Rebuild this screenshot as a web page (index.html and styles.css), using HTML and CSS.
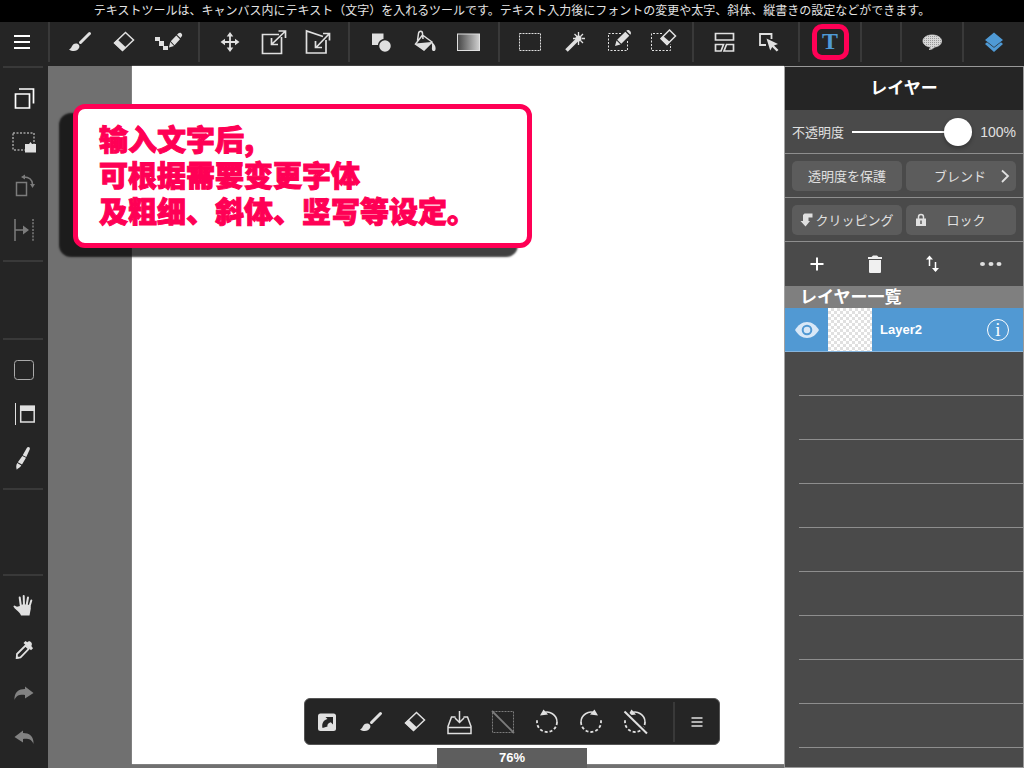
FILE: index.html
```html
<!DOCTYPE html>
<html lang="ja">
<head>
<meta charset="utf-8">
<title>テキストツール</title>
<link rel="stylesheet" href="styles.css">
</head>
<body>
<svg class="defs" aria-hidden="true">
  <defs>
    <linearGradient id="fade"><stop offset="0" stop-color="#444"/><stop offset="1" stop-color="#d0d0d0"/></linearGradient>
    <pattern id="mesh" width="2" height="2" patternUnits="userSpaceOnUse"><rect width="2" height="2" fill="#d8d8d8"/><rect width="1" height="1" fill="#999"/></pattern>
  </defs>
  <symbol id="brush" viewBox="0 0 32 32">
    <path d="M25.5 7.5 16.500 16.500" stroke="currentColor" stroke-width="3" stroke-linecap="round"/>
    <path fill="currentColor" d="M5 23.500c3-.5 2.500-6 7-6 3 0 4 2.500 3 4.500-1.500 3.500-6.500 4-10 1.500z"/>
  </symbol>
  <symbol id="eraser" viewBox="0 0 32 32">
    <path fill="none" stroke="currentColor" stroke-width="1.500" d="M17.500 6.500 25.500 14 14.500 24.500 6.500 17z"/>
    <path fill="currentColor" d="M9.500 13.500 18 21.500 14.500 25 6 17z"/>
  </symbol>
  <symbol id="menu" viewBox="0 0 32 32"><path stroke="currentColor" stroke-width="2" d="M8 10H24M8 16H24M8 22H24"/></symbol>
  <symbol id="turn" viewBox="0 0 32 32">
    <path fill="none" stroke="currentColor" stroke-width="1.500" d="M12 7A10 10 0 0 1 26 16"/>
    <path fill="none" stroke="currentColor" stroke-width="1.800" stroke-dasharray="3 2" d="M26 16A10 10 0 0 1 6 16V14"/>
    <path fill="currentColor" d="M9 9.500 12.500 3.500 17 8.500z"/>
  </symbol>
</svg>
<div class="app">
  <header class="hint">テキストツールは、キャンバス内にテキスト（文字）を入れるツールです。テキスト入力後にフォントの変更や太字、斜体、縦書きの設定などができます。</header>

  <nav class="toolbar" aria-label="ツール">
    <div class="group group-menu">
      <button class="tool" aria-label="メニュー"><svg class="icon bright"><use href="#menu"/></svg></button>
    </div>
    <div class="group">
      <button class="tool" aria-label="ブラシ"><svg class="icon"><use href="#brush"/></svg></button>
      <button class="tool" aria-label="消しゴム"><svg class="icon"><use href="#eraser"/></svg></button>
      <button class="tool" aria-label="ドットペン"><svg class="icon" viewBox="0 0 32 32"><path fill="currentColor" d="M3 11h5v4h4v5h4v4h-5v-4h-4v-5h-4zM17 21.500l1.200-5.500 3.800 4zM18.800 15.300 24.300 9.500l3.700 3.700-5.500 6zM25 8.800l1.500-1.500c1.800-1.800 4.800 1.200 3.300 3l-1.300 1.800z"/></svg></button>
    </div>
    <div class="group">
      <button class="tool" aria-label="移動"><svg class="icon" viewBox="0 0 32 32"><path stroke="currentColor" stroke-width="1.800" d="M16 8V24M8 16H24"/><path fill="currentColor" d="M16 6l3.300 4.500h-6.600zM16 26l3.300-4.500h-6.600zM6.500 16l4.500-3.300v6.600zM25.500 16l-4.500-3.300v6.600z"/></svg></button>
      <button class="tool" aria-label="変形"><svg class="icon" viewBox="0 0 32 32"><path fill="none" stroke="currentColor" stroke-width="1.700" d="M21 8.500H4.500V27.500H23.500V11M14 18 27 5.500M20.500 5H27.500V12M13.500 12V18.500H20"/></svg></button>
      <button class="tool" aria-label="自由変形"><svg class="icon" viewBox="0 0 32 32"><path fill="none" stroke="currentColor" stroke-width="1.700" d="M21 10.500 4.500 5V27H24V14M14 21.500 27 8M21 7.500H27.500V14.500M13.500 15V21.500H20"/></svg></button>
    </div>
    <div class="group">
      <button class="tool" aria-label="図形"><svg class="icon" viewBox="0 0 32 32"><path fill="currentColor" d="M8 7.500H19.500V19H8z"/><circle cx="21" cy="20" r="6.500" fill="currentColor" stroke="#252525" stroke-width="1.500"/></svg></button>
      <button class="tool" aria-label="塗りつぶし"><svg class="icon" viewBox="0 0 32 32"><path fill="none" stroke="currentColor" stroke-width="1.500" d="M14.500 9 24 16 16 24 7.500 18zM9.500 14.500 10.500 7.500C11 4.500 14.500 4.500 14.500 7.500L15 13"/><path fill="currentColor" d="M7.500 17.500 23.500 16 16 24.500zM23 16c3.500 1 5 5 4.500 7.500-.5 2-3 2-3.500 0-.3-2 .8-4-1-7.500z"/></svg></button>
      <button class="tool" aria-label="グラデーション"><svg class="icon" viewBox="0 0 32 32"><rect x="5.500" y="8" width="22" height="16.500" fill="url(#fade)" stroke="currentColor"/></svg></button>
    </div>
    <div class="group">
      <button class="tool" aria-label="選択範囲"><svg class="icon" viewBox="0 0 32 32"><rect x="5.500" y="7.500" width="21" height="17" fill="none" stroke="currentColor" stroke-dasharray="2 1"/></svg></button>
      <button class="tool" aria-label="自動選択"><svg class="icon" viewBox="0 0 32 32"><path stroke="currentColor" stroke-width="3.500" d="M8.500 24.500 19 14"/><circle cx="20.500" cy="12.500" r="3" fill="currentColor"/><path stroke="currentColor" stroke-width="1.300" d="M20.500 6V10M20.500 15V19M15 12.500H18M24 12.500H27M16.500 8 19 10.500M25 8 22.500 10.500M25 17 22.500 14.500"/></svg></button>
      <button class="tool" aria-label="選択ペン"><svg class="icon" viewBox="0 0 32 32"><path fill="none" stroke="currentColor" stroke-dasharray="2 1.500" d="M19 7.500H6.500V24.500H25.500V14"/><path fill="currentColor" d="M13 20l1.500-5.500 4 4zM15.200 13.800 23.300 5.800l4 4-8 8zM24.300 4.800c2-2.500 6.500 1.300 4 4z"/></svg></button>
      <button class="tool" aria-label="選択消し"><svg class="icon" viewBox="0 0 32 32"><path fill="none" stroke="currentColor" stroke-dasharray="2 1.500" d="M16 7.500H5.500V24.500H24.500V18"/><path fill="none" stroke="currentColor" stroke-width="1.500" d="M23.500 4 29.500 10 21 18.500 15 12.500z"/><path fill="currentColor" d="M17 10 24 16 21 19.500 14.500 13z"/></svg></button>
    </div>
    <div class="group">
      <button class="tool" aria-label="コマ割り"><svg class="icon" viewBox="0 0 32 32"><path fill="none" stroke="currentColor" stroke-width="1.700" d="M7.500 7.500H25.500V14H7.500zM7.500 18.500H15.500L13 25H7.500zM18.500 18.500H25.500V25H16z"/></svg></button>
      <button class="tool" aria-label="操作"><svg class="icon" viewBox="0 0 32 32"><path fill="none" stroke="currentColor" stroke-width="1.800" d="M14 19H8V8H19.500V13"/><path fill="currentColor" d="M14.500 12.500 26 18l-4 1.500 4.500 4.500-1.800 1.500-4.500-4.500-2 3.500z"/></svg></button>
    </div>
    <div class="group">
      <button class="tool" aria-label="テキスト"><span class="text-mark">T</span></button>
    </div>
    <div class="group group-gap"></div>
    <div class="group">
      <button class="tool" aria-label="吹き出し"><svg class="icon" viewBox="0 0 32 32"><path fill="url(#mesh)" stroke="#d8d8d8" stroke-width=".8" d="M16 9c5.500 0 9.500 2.500 9.500 6s-3 5.500-7 6c-1 1.500-3 2.500-5.500 2.500 1-.7 1.500-1.500 1.500-2.500-4.500-.5-7.500-3-7.500-6 0-3.500 4-6 9-6z"/></svg></button>
    </div>
    <div class="group group-last">
      <button class="tool" aria-label="レイヤー"><svg class="icon active" viewBox="0 0 32 32"><path fill="currentColor" d="M16 6.500 25 14 16 21 7 14zM7 18l2-1.700 7 5.500 7-5.500 2 1.700-9 8z"/></svg></button>
    </div>
  </nav>

  <main class="work">
    <nav class="side" aria-label="編集">
      <div class="side-group">
        <button class="tool" aria-label="複製"><svg class="icon bright" viewBox="0 0 32 32"><path fill="none" stroke="currentColor" stroke-width="1.700" d="M7.500 12H21.500V26H7.500zM11 7H25.500V21.500"/></svg></button>
        <button class="tool" aria-label="選択範囲"><svg class="icon" viewBox="0 0 32 32"><rect x="5" y="7" width="21" height="17" fill="none" stroke="currentColor" stroke-dasharray="2 1.500"/><path fill="currentColor" d="M17 18h4l1.500-2 1.500 2h4v8.500H17z"/></svg></button>
        <button class="tool" aria-label="回転"><svg class="icon dim" viewBox="0 0 32 32"><path fill="none" stroke="currentColor" stroke-width="1.500" d="M8.500 12.500H18.500V25.500H8.500zM16 7C21 7 24 10 24.500 14"/><path fill="currentColor" d="M13 7l4-2.500v5zM24.500 18l-2.500-4h5z"/></svg></button>
        <button class="tool" aria-label="反転"><svg class="icon dim" viewBox="0 0 32 32"><path stroke="currentColor" stroke-width="1.500" d="M7 5V27M7 16H17"/><path stroke="currentColor" stroke-width="1.500" stroke-dasharray="2 1.300" d="M25 5V27"/><path fill="currentColor" d="M21 16l-6-4.500v9z"/></svg></button>
      </div>
      <div class="side-space side-space-top"></div>
      <div class="side-group">
        <button class="tool" aria-label="色"><svg class="icon soft" viewBox="0 0 32 32"><rect x="6.500" y="6.500" width="19" height="19" rx="3" fill="none" stroke="currentColor"/></svg></button>
        <button class="tool" aria-label="パネル"><svg class="icon" viewBox="0 0 32 32"><path stroke="currentColor" d="M7.500 5V27"/><path fill="none" stroke="currentColor" stroke-width="1.500" d="M12.700 8.500H26.200V24H12.700z"/><path fill="currentColor" d="M12 7.500H27V13H12z"/></svg></button>
        <button class="tool" aria-label="ブラシ設定"><svg class="icon" viewBox="0 0 32 32"><path fill="currentColor" d="M18.800 6c1-1.800 3.700-.8 3 1.200L18.300 15l-3.600-1.700zM14.300 14 18 15.800 14 22.500 9.800 20.300zM9.300 21 13.300 23.500C12 26 9.500 26 8.800 27.800 8 25.500 8 23 9.300 21z"/></svg></button>
      </div>
      <div class="side-space side-space-bottom"></div>
      <div class="side-group side-group-end">
        <button class="tool" aria-label="手のひら"><svg class="icon" viewBox="0 0 32 32"><path stroke="currentColor" stroke-width="2" stroke-linecap="round" d="M13 17 11.700 7.500M16 16 15.700 6M18.500 16 20 7.500M21 18 23.300 10.500M12.500 20 6.500 16.500"/><path fill="currentColor" d="M5.800 17.500 12 16V15.500L14 14.500H20L22.500 16 22.800 18.500 21.500 25.500H13C12 23 10.500 21.500 8.500 20z"/></svg></button>
        <button class="tool" aria-label="スポイト"><svg class="icon" viewBox="0 0 32 32"><path fill="none" stroke="currentColor" stroke-width="1.800" d="M8.700 24 9 20 17.500 11.500 20.800 14.800 12.500 23.300z"/><path fill="currentColor" d="M15.500 9 17.500 7l1.800 1.300c2-2.800 6.200.9 4 3.700l1.700 2.300-2 2-7.500-7.300zM8 24.800V21.500l3.300 2.800z"/></svg></button>
        <button class="tool" aria-label="やり直す"><svg class="icon dimmer" viewBox="0 0 32 32"><path fill="currentColor" d="M6.500 22C6 14 11 11 17 11V8.500L25.500 15 17 20.500V17C12 16.500 8.500 17 6.500 22z"/></svg></button>
        <button class="tool" aria-label="取り消す"><svg class="icon dimmer" viewBox="0 0 32 32"><path fill="currentColor" d="M25.500 22C26 14 21 11 15 11V8.500L6.500 15 15 20.500V17C20 16.500 23.500 17 25.500 22z"/></svg></button>
      </div>
    </nav>

    <section class="canvas">
      <div class="paper"></div>
      <p class="callout" lang="zh-CN">输入文字后,<br>可根据需要变更字体<br>及粗细、斜体、竖写等设定。</p>
    </section>

    <aside class="panel">
      <h1 class="panel-title">レイヤー</h1>
      <div class="row row-opacity">
        <label for="opacity">不透明度</label>
        <input class="slider" id="opacity" type="range" min="0" max="100" value="100">
        <output class="percent" for="opacity">100%</output>
      </div>
      <div class="row row-pair">
        <button class="chip chip-center">透明度を保護</button>
        <button class="chip chip-more"><span>ブレンド</span><svg class="chip-icon" viewBox="0 0 10 16"><path fill="none" stroke="currentColor" stroke-width="1.800" d="M2 2.500 8 8 2 14"/></svg></button>
      </div>
      <div class="row row-pair">
        <button class="chip chip-center"><svg class="chip-clip-icon" viewBox="0 0 13 16"><path fill="currentColor" d="M4.500 1.500H12.500V5.500H8.500V9H10L5.500 14.500.5 9H3V3z"/></svg><span>クリッピング</span></button>
        <button class="chip"><svg class="chip-icon" viewBox="0 0 10 16"><path fill="none" stroke="currentColor" stroke-width="1.500" d="M2.500 7V5a2.500 2.500 0 0 1 5 0V7"/><path fill="currentColor" d="M0 6.500H10V14H0z"/><path stroke="#5c5c5c" stroke-width="1.500" d="M5 8.500V12"/></svg><span class="chip-label">ロック</span></button>
      </div>
      <div class="row row-actions">
        <button class="action" aria-label="追加"><svg class="icon bright" viewBox="0 0 32 32"><path stroke="currentColor" stroke-width="2" d="M16 9.500V22.500M9.500 16H22.500"/></svg></button>
        <button class="action" aria-label="削除"><svg class="icon bright" viewBox="0 0 32 32"><path fill="#f0f0f0" d="M9 9H12.500L14 7.500H18L19.500 9H23V11H9zM10 12H22V23.500C22 24.500 21.500 25 20.500 25H11.500C10.500 25 10 24.500 10 23.500z"/></svg></button>
        <button class="action" aria-label="並べ替え"><svg class="icon bright" viewBox="0 0 32 32"><path stroke="currentColor" stroke-width="1.500" d="M12.500 9V18M18.500 14V23"/><path fill="currentColor" d="M12.500 7.500 16 11.500H9zM18.500 24 15 20H22z"/></svg></button>
        <button class="action" aria-label="その他"><svg class="icon" viewBox="0 0 32 32"><g fill="currentColor"><ellipse cx="7.500" cy="16" rx="2.500" ry="2"/><ellipse cx="16" cy="16" rx="2.500" ry="2"/><ellipse cx="24" cy="16" rx="2.500" ry="2"/></g></svg></button>
      </div>
      <h2 class="list-title">レイヤー一覧</h2>
      <ul class="layers">
        <li class="layer">
          <button class="eye" aria-label="表示"><svg class="eye-icon" viewBox="0 0 24 16"><path fill="#d9e8f7" d="M0 8C3 3 7 0 12 0s9 3 12 8c-3 5-7 8-12 8S3 13 0 8z"/><circle cx="12" cy="8" r="4.300" fill="none" stroke="#5199d3" stroke-width="2"/></svg></button>
          <span class="thumb"></span>
          <span class="layer-name">Layer2</span>
          <button class="info" aria-label="情報">i</button>
        </li>
        <li class="slot"></li><li class="slot"></li><li class="slot"></li>
        <li class="slot"></li><li class="slot"></li><li class="slot"></li>
        <li class="slot"></li><li class="slot"></li><li class="slot"></li>
      </ul>
    </aside>
  </main>

  <div class="dock">
    <nav class="quick" aria-label="クイックツール">
      <button class="tool" aria-label="切り替え"><svg class="icon" viewBox="0 0 32 32"><rect x="7" y="7.500" width="18" height="17.500" rx="2.500" fill="currentColor"/><path fill="#252525" d="M11.500 22C10.500 17.500 12.500 14 16.500 13L14.500 11H22V18.500L19.800 16.300C17 17 16 19 16.500 20.500z"/></svg></button>
      <button class="tool" aria-label="ブラシ"><svg class="icon"><use href="#brush"/></svg></button>
      <button class="tool" aria-label="消しゴム"><svg class="icon"><use href="#eraser"/></svg></button>
      <button class="tool" aria-label="保存"><svg class="icon" viewBox="0 0 32 32"><path fill="none" stroke="currentColor" stroke-width="1.500" d="M12.500 11H8.500L5 20.500V27.500H28V20.500L24.500 11H20.500M5 21.500H28M16.500 5V16M12 12 16.500 16.500 21 12"/></svg></button>
      <button class="tool" aria-label="選択解除"><svg class="icon dim" viewBox="0 0 32 32"><rect x="5.500" y="5.500" width="21" height="21" fill="none" stroke="currentColor" stroke-dasharray="2 1"/><path stroke="currentColor" stroke-width="1.800" d="M5 5 27 27"/></svg></button>
      <button class="tool" aria-label="左回転"><svg class="icon"><use href="#turn"/></svg></button>
      <button class="tool" aria-label="右回転"><svg class="icon flip"><use href="#turn"/></svg></button>
      <button class="tool" aria-label="回転リセット"><svg class="icon" viewBox="0 0 32 32"><use href="#turn"/><path stroke="#252525" stroke-width="2" d="M7.500 5.500 28.500 26"/><path stroke="currentColor" stroke-width="2" d="M5.500 5.500 28 27.500"/></svg></button>
      <span class="quick-rule"></span>
      <button class="tool" aria-label="メニュー"><svg class="icon" viewBox="0 0 32 32"><path stroke="currentColor" stroke-width="1.500" d="M10.500 12H21.500M10.500 16H21.500M10.500 20H21.500"/></svg></button>
    </nav>
    <div class="zoom">76%</div>
  </div>
</div>
</body>
</html>
```

FILE: styles.css
```css
* { box-sizing: border-box; }

body {
  margin: 0;
  font-family: "Liberation Sans", "Noto Sans CJK JP", sans-serif;
  color: #e0e0e0;
  background: #252525;
}

button {
  margin: 0;
  padding: 0;
  border: 0;
  background: none;
  color: inherit;
  font: inherit;
}

.defs { position: absolute; width: 0; height: 0; }

.app {
  position: relative;
  display: flex;
  flex-direction: column;
  height: 100vh;
  overflow: hidden;
}

.hint {
  flex: none;
  background: #000;
  color: #e4e4e4;
  font-size: 12px;
  line-height: 22px;
  text-align: center;
  white-space: nowrap;
}

/* Icons */
.tool {
  flex: none;
  display: flex;
  align-items: center;
  justify-content: center;
  width: 44px;
  height: 44px;
}
.icon { display: block; width: 32px; height: 32px; color: #e0e0e0; }
.bright { color: #fff; }
.soft { color: #aaa; }
.dim { color: #7c7c7c; }
.dimmer { color: #828282; }
.active { color: #4f9ad5; }
.flip { transform: scaleX(-1); }

/* Top toolbar */
.toolbar {
  flex: none;
  display: flex;
  padding-bottom: 4px;
  background: #252525;
}
.toolbar .tool { height: 40px; }
.group {
  display: flex;
  padding: 0 8px;
  border-right: 2px solid #393939;
}
.group-menu { padding: 0 4px 0 0; }
.group-gap { width: 40px; padding: 0; }
.group-last { border-right: 0; }
.text-mark {
  flex: none;
  width: 37px;
  height: 36px;
  border: 5px solid #ff0055;
  border-radius: 10px;
  color: #4f9ad5;
  font: bold 24px/25px "Liberation Serif", serif;
  text-align: center;
}

/* Work area */
.work {
  flex: 1;
  min-height: 0;
  display: grid;
  grid-template-columns: 48px minmax(0, 1fr) 240px;
  grid-template-rows: minmax(0, 1fr);
}

.side {
  display: flex;
  flex-direction: column;
  align-items: center;
  padding: 0 5px 0 3px;
  background: #252525;
}
.side-group {
  display: flex;
  flex-direction: column;
  align-items: center;
  width: 40px;
  padding: 8px 0;
  border: solid #393939;
  border-width: 2px 0;
}
.side-group .tool { margin-left: 2px; }
.side-group-end { border-bottom: 0; }
.side-space-top { flex: 19; }
.side-space-bottom { flex: 21; }

.canvas {
  position: relative;
  padding: 0 0 4px 84px;
  background: #707070;
}
.paper {
  height: 100%;
  background: #fff;
  box-shadow: 0 0 1px #ccc;
}
.callout {
  position: absolute;
  top: 38px;
  left: 25px;
  width: 459px;
  margin: 0;
  padding: 11px 21px 15px;
  border: 5px solid #ff0055;
  border-radius: 12px;
  background: #fff;
  box-shadow: -14px 9px 2px rgba(0, 0, 0, .75);
  color: #ff0055;
  font: 900 29px/36px "Noto Sans CJK SC", sans-serif;
  -webkit-text-stroke: 1px #ff0055;
}

/* Layer panel */
.panel {
  display: flex;
  flex-direction: column;
  min-height: 0;
  border: 1px solid #999;
  background: #4a4a4a;
}
.panel-title {
  margin: 0;
  background: #252525;
  color: #fff;
  font-size: 17px;
  font-weight: 700;
  line-height: 43px;
  text-align: center;
}
.row {
  flex: none;
  display: flex;
  align-items: center;
  height: 44px;
  border-bottom: 1px solid #8e8e8e;
  font-size: 13px;
}
.row-opacity { gap: 8px; padding: 0 7px; }
.row-opacity label { flex: none; }
.percent { flex: none; font-size: 14px; }
.slider {
  flex: 1;
  min-width: 0;
  height: 28px;
  margin: 0;
  background: none;
  appearance: none;
}
.slider::-webkit-slider-runnable-track { height: 2px; background: #fff; }
.slider::-webkit-slider-thumb {
  appearance: none;
  width: 28px;
  height: 28px;
  margin-top: -13px;
  border-radius: 50%;
  background: #fff;
  box-shadow: 0 2px 4px rgba(0, 0, 0, .3);
}
.row-pair {
  display: grid;
  grid-template-columns: minmax(0, 1fr) minmax(0, 1fr);
  gap: 4px;
  padding: 0 7px;
}
.chip {
  display: flex;
  align-items: center;
  height: 30px;
  padding: 0 10px;
  border-radius: 5px;
  background: #5c5c5c;
  white-space: nowrap;
}
.chip-center { justify-content: center; gap: 2px; padding: 0 4px; }
.chip-icon { flex: none; width: 10px; height: 16px; }
.chip-clip-icon { flex: none; width: 13px; height: 16px; }
.chip-label { flex: 1; text-align: center; }
.chip-more { justify-content: flex-end; gap: 14px; padding: 0 6px; }
.row-actions { padding: 0 3px; border-bottom: 0; }
.action { flex: 1; display: flex; justify-content: center; }

.list-title {
  flex: none;
  height: 22px;
  margin: 0;
  padding-left: 15px;
  background: #7f7f7f;
  color: #fff;
  font-size: 17px;
  font-weight: 700;
  line-height: 24px;
}
.layers {
  flex: 1;
  min-height: 0;
  margin: 0;
  padding: 0;
  overflow: hidden;
  list-style: none;
}
.layer {
  display: flex;
  align-items: center;
  height: 44px;
  padding-right: 14px;
  border-bottom: 1px solid #86b4dc;
  background: #5199d3;
  color: #fff;
}
.eye { display: flex; justify-content: center; width: 43px; }
.eye-icon { width: 24px; height: 16px; }
.thumb {
  width: 44px;
  height: 43px;
  background: repeating-conic-gradient(#e0e0e0 0 25%, #fff 0 50%) 0 0 / 6px 6px;
}
.layer-name { flex: 1; padding-left: 8px; font-size: 13px; font-weight: 700; }
.info {
  width: 22px;
  height: 22px;
  border: 1px solid #fff;
  border-radius: 50%;
  font: 19px/20px "Liberation Serif", serif;
}
.slot { height: 44px; margin-left: 14px; border-bottom: 1px solid #8e8e8e; }

/* Floating dock over the canvas */
.dock {
  position: absolute;
  bottom: 0;
  left: 50%;
  display: flex;
  flex-direction: column;
  align-items: center;
  gap: 3px;
  transform: translateX(-50%);
}
.quick {
  display: flex;
  align-items: center;
  height: 47px;
  border: 1px solid #555;
  border-radius: 6px;
  background: #252525;
}
.quick-rule { width: 2px; height: 40px; margin-left: 16px; background: #393939; }
.zoom {
  width: 150px;
  background: #5e5e5e;
  color: #fff;
  font-size: 13px;
  font-weight: 700;
  line-height: 20px;
  text-align: center;
}
```
